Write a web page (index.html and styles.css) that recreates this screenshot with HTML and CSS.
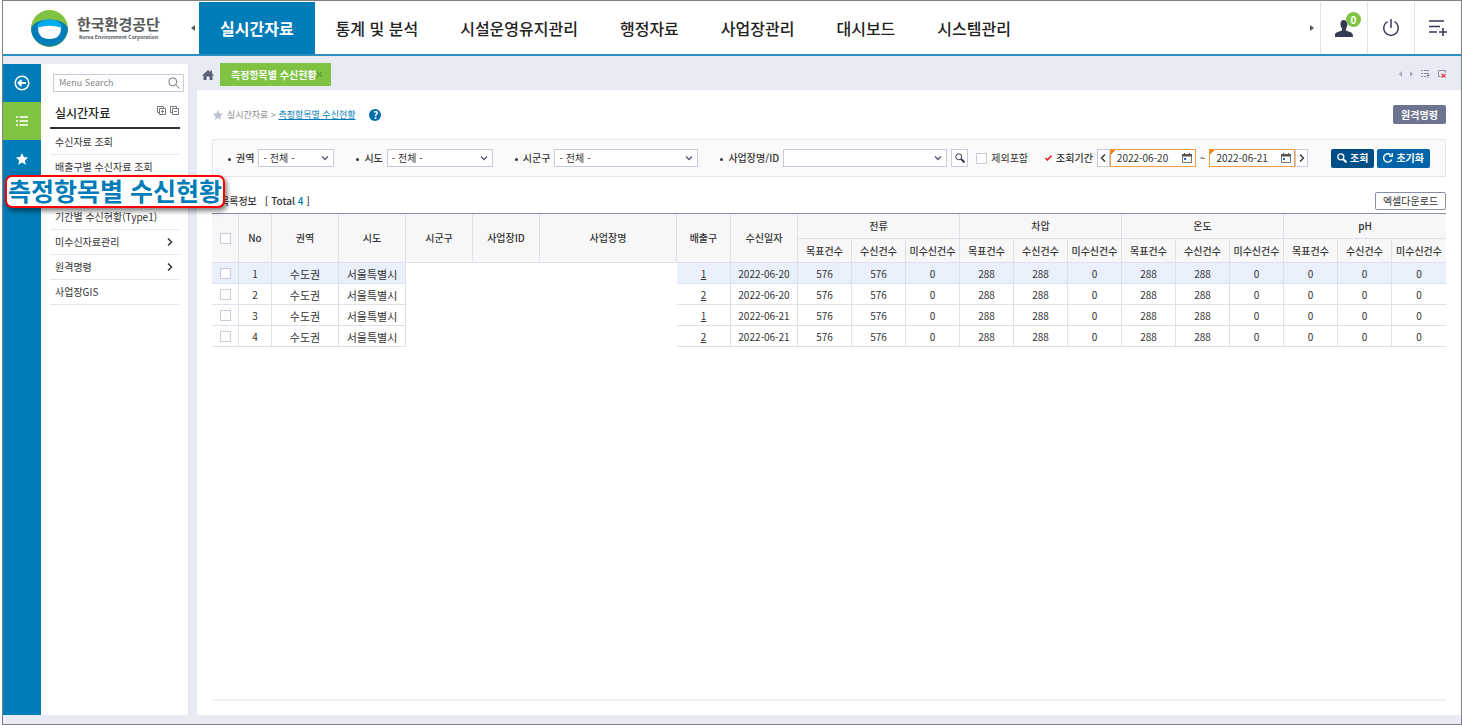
FILE: index.html
```
<!DOCTYPE html>
<html lang="ko">
<head>
<meta charset="utf-8">
<title>측정항목별 수신현황</title>
<link rel="stylesheet" href="styles.css">
</head>
<body>
<div class="app">
  <header class="header">
    <a class="logo" href="#">
      <svg class="logo-mark" viewBox="0 0 37 37" aria-hidden="true">
        <circle cx="18.500" cy="18.500" r="18.500" fill="#80c342"/>
        <path d="M0 18Q4 9.500 18.500 9.500T37 18A18.500 18.500 0 0 1 0 18z" fill="#007cb8"/>
        <path d="M6 17Q8 9.500 18.500 9.500T31 17L18.500 20z" fill="#00aeef"/>
        <path d="M7 17.500Q18.500 14 30 17.500Q30 29 18.500 29T7 17.500z" fill="#fff"/>
      </svg>
      <span class="logo-text"><strong>한국환경공단</strong><small>Korea Environment Corporation</small></span>
    </a>
    <button class="scroll-btn" aria-label="이전 메뉴"><svg width="4" height="6" viewBox="0 0 4 6"><path d="M4 0v6L0 3z" fill="#555"/></svg></button>
    <nav class="main-nav">
      <a class="active" href="#">실시간자료</a>
      <a href="#">통계 및 분석</a>
      <a href="#">시설운영유지관리</a>
      <a href="#">행정자료</a>
      <a href="#">사업장관리</a>
      <a href="#">대시보드</a>
      <a href="#">시스템관리</a>
    </nav>
    <button class="scroll-btn next" aria-label="다음 메뉴"><svg width="4" height="6" viewBox="0 0 4 6"><path d="M0 0v6l4-3z" fill="#555"/></svg></button>
    <div class="tools">
      <button aria-label="사용자">
        <svg width="18" height="18" viewBox="0 0 18 18"><path d="M8.500 1C6.500 1 5.300 3 5.500 5.500c.1 2 .8 3 1.500 4v1.800c-1 1.200-6.500 1.700-7 4L0 18h18l-.3-2.700c-.5-2.300-5.700-2.800-6.700-4V9.500c.7-1 1.300-2 1.400-4C12.500 3 11 1 8.500 1z" fill="#363a54"/></svg>
        <span class="badge">0</span>
      </button>
      <button aria-label="로그아웃"><svg width="18" height="18" viewBox="0 0 18 18" fill="none" stroke="#363a54" stroke-width="1.500"><path d="M5.500 2.700a7.300 7.300 0 1 0 7 0M9 0v9"/></svg></button>
      <button aria-label="메뉴 추가"><svg width="18" height="16" viewBox="0 0 18 16" fill="none" stroke="#363a54" stroke-width="1.600"><path d="M0 1h15M0 6.500h11M0 12h8M10 12h8M14 8v8"/></svg></button>
    </div>
  </header>

  <div class="body">
    <div class="rail">
      <button aria-label="메뉴 닫기"><svg width="16" height="16" viewBox="0 0 16 16" fill="none" stroke="#fff" stroke-width="1.500"><circle cx="8" cy="8" r="6.800"/><path d="M12 8H5M7.500 5L4.500 8l3 3" stroke-width="2"/></svg></button>
      <button class="on" aria-label="메뉴 목록"><svg width="12" height="10" viewBox="0 0 12 10" stroke="#fff" stroke-width="1.500"><path d="M0 1h2M3.500 1H12M0 5h2M3.500 5H12M0 9h2M3.500 9H12"/></svg></button>
      <button aria-label="즐겨찾기"><svg width="12" height="12" viewBox="0 0 12 12"><path d="M6 0l1.800 4 4.200.5-3.100 2.900.8 4.300L6 9.600l-3.700 2.100.8-4.300L0 4.500 4.200 4z" fill="#fff"/></svg></button>
    </div>
    <aside class="side">
      <div class="menu-search">
        <input type="text" placeholder="Menu Search" aria-label="Menu Search">
        <button aria-label="검색"><svg width="12" height="12" viewBox="0 0 12 12" fill="none" stroke="#777"><circle cx="4.800" cy="4.800" r="4"/><path d="M7.800 7.800L11.500 11.500"/></svg></button>
      </div>
      <div class="side-head">
        <h2>실시간자료</h2>
        <button aria-label="모두 펼치기"><svg width="9" height="9" viewBox="0 0 9 9" fill="none" stroke="#777"><path d="M2 6.500H.5v-6h6V2M2.500 2.500h6v6h-6zM4 5.500h3M5.500 4v3"/></svg></button>
        <button aria-label="모두 접기"><svg width="9" height="9" viewBox="0 0 9 9" fill="none" stroke="#777"><path d="M2 6.500H.5v-6h6V2M2.500 2.500h6v6h-6zM4 5.500h3"/></svg></button>
      </div>
      <ul class="side-menu">
        <li><a href="#">수신자료 조회</a></li>
        <li><a href="#">배출구별 수신자료 조회</a></li>
        <li class="current"><a class="callout" href="#">측정항목별 수신현황</a></li>
        <li><a href="#">기간별 수신현황(Type1)</a></li>
        <li><a href="#">미수신자료관리<svg width="6" height="8" viewBox="0 0 6 8" fill="none" stroke="#333" stroke-width="1.500"><path d="M1 .5L4.500 4 1 7.500"/></svg></a></li>
        <li><a href="#">원격명령<svg width="6" height="8" viewBox="0 0 6 8" fill="none" stroke="#333" stroke-width="1.500"><path d="M1 .5L4.500 4 1 7.500"/></svg></a></li>
        <li><a href="#">사업장GIS</a></li>
      </ul>
    </aside>

    <div class="work">
      <div class="tabs">
        <a class="home" href="#" aria-label="홈"><svg width="12" height="10" viewBox="0 0 12 10"><path d="M6 0l2.500 2V.5H10v2.800L12 5.500h-1.500V10h-3V6.500h-3V10h-3V5.500H0z" fill="#5b617b"/></svg></a>
        <div class="tab"><span>측정항목별 수신현황</span><button aria-label="탭 닫기"><svg width="5" height="5" viewBox="0 0 5 5" stroke="#4e7a2a"><path d="M0 0l5 5M5 0L0 5"/></svg></button></div>
        <div class="tab-tools">
          <button aria-label="이전 탭"><svg width="3" height="6" viewBox="0 0 3 6"><path d="M3 0v6L0 3z" fill="#a3a6b5"/></svg></button>
          <button aria-label="다음 탭"><svg width="3" height="6" viewBox="0 0 3 6"><path d="M0 0v6l3-3z" fill="#a3a6b5"/></svg></button>
          <button aria-label="탭 목록"><svg width="9" height="8" viewBox="0 0 9 8" stroke="#8b8fa3"><path d="M0 .5h2M3 .5h5M0 3.500h2M3 3.500h5M0 6.500h2M3 6.500h2M5.500 5.500h3M7 4v4"/></svg></button>
          <button aria-label="모두 닫기"><svg width="8" height="8" viewBox="0 0 8 8" fill="none" stroke="#8b8fa3"><path d="M2.500 6.500h-2v-6h7v2"/><path d="M3.500 4l4 3.500M7.500 4l-4 3.500" stroke="#e5353f" stroke-width="1.300"/></svg></button>
        </div>
      </div>

      <main class="page">
        <div class="crumbs">
          <svg width="10" height="10" viewBox="0 0 12 12"><path d="M6 0l1.800 4 4.200.5-3.100 2.900.8 4.300L6 9.600l-3.700 2.100.8-4.300L0 4.500 4.200 4z" fill="#b9c3d4"/></svg>
          <span>실시간자료 &gt; <a href="#">측정항목별 수신현황</a></span>
          <button class="help" aria-label="도움말">?</button>
          <button class="remote">원격명령</button>
        </div>

        <form class="filter">
          <div class="field area">
            <label for="area">권역</label>
            <span class="pick"><select id="area"><option>- 전체 -</option></select><svg viewBox="0 0 8 5"><path d="M1 .5l3 3 3-3"/></svg></span>
          </div>
          <div class="field sido">
            <label for="sido">시도</label>
            <span class="pick"><select id="sido"><option>- 전체 -</option></select><svg viewBox="0 0 8 5"><path d="M1 .5l3 3 3-3"/></svg></span>
          </div>
          <div class="field sigungu">
            <label for="sigungu">시군구</label>
            <span class="pick"><select id="sigungu"><option>- 전체 -</option></select><svg viewBox="0 0 8 5"><path d="M1 .5l3 3 3-3"/></svg></span>
          </div>
          <div class="field site">
            <label for="site">사업장명/ID</label>
            <span class="pick"><select id="site"><option></option></select><svg viewBox="0 0 8 5"><path d="M1 .5l3 3 3-3"/></svg></span>
            <button class="find" type="button" aria-label="사업장 검색"><svg width="10" height="10" viewBox="0 0 10 10" fill="none" stroke="#363a54"><circle cx="3.800" cy="3.800" r="3"/><path d="M6 6l3.500 3.500" stroke-width="2"/></svg></button>
          </div>
          <div class="exclude"><input type="checkbox" id="exclude"><label for="exclude">제외포함</label></div>
          <div class="period">
            <svg class="must" width="7" height="6" viewBox="0 0 7 6" fill="none" stroke="#e8202a" stroke-width="1.600"><path d="M.5 3l2 2L6.500.5"/></svg>
            <label for="from">조회기간</label>
            <div class="range">
              <button class="step" type="button" aria-label="이전 날짜"><svg width="6" height="8" viewBox="0 0 6 8"><path d="M5 .5L1.500 4 5 7.500"/></svg></button>
              <span class="date"><input id="from" type="text" value="2022-06-20"><svg width="10" height="10" viewBox="0 0 10 10"><path d="M.5 1.500h9v8h-9z" fill="#fff" stroke="#777"/><path d="M0 1h10v2.500H0zM2 0h1v1H2zM7 0h1v1H7z" fill="#555"/><path d="M2 5h2v2H2z" fill="#2d5bd8"/></svg></span>
            </div>
            <span class="tilde">~</span>
            <div class="range">
              <span class="date"><input id="to" type="text" value="2022-06-21" aria-label="종료일"><svg width="10" height="10" viewBox="0 0 10 10"><path d="M.5 1.500h9v8h-9z" fill="#fff" stroke="#777"/><path d="M0 1h10v2.500H0zM2 0h1v1H2zM7 0h1v1H7z" fill="#555"/><path d="M2 5h2v2H2z" fill="#2d5bd8"/></svg></span>
              <button class="step" type="button" aria-label="다음 날짜"><svg width="6" height="8" viewBox="0 0 6 8"><path d="M1 .5L4.500 4 1 7.500"/></svg></button>
            </div>
          </div>
          <div class="actions">
            <button class="query" type="button"><svg width="10" height="10" viewBox="0 0 10 10" fill="none" stroke="#fff"><circle cx="3.800" cy="3.800" r="3" stroke-width="1.300"/><path d="M6 6l3.500 3.500" stroke-width="2"/></svg>조회</button>
            <button type="reset"><svg width="10" height="10" viewBox="0 0 10 10" fill="none" stroke="#fff" stroke-width="1.400"><path d="M8.700 6.500A4.200 4.200 0 1 1 7.500 1.700M9.300 0v3.300H6"/></svg>초기화</button>
          </div>
        </form>

        <div class="list-head">
          <h3>목록정보</h3><span>[ Total <b>4</b> ]</span>
          <button>엑셀다운로드</button>
        </div>

        <div class="grid">
          <table>
            <colgroup>
              <col class="c-check"><col class="c-no"><col class="c-mid"><col class="c-mid"><col class="c-mid"><col class="c-mid"><col class="c-name"><col class="c-num"><col class="c-mid">
              <col span="12" class="c-num">
            </colgroup>
            <thead>
              <tr>
                <th rowspan="2"><input type="checkbox" aria-label="전체 선택"></th>
                <th rowspan="2">No</th><th rowspan="2">권역</th><th rowspan="2">시도</th><th rowspan="2">시군구</th><th rowspan="2">사업장ID</th><th rowspan="2">사업장명</th><th rowspan="2">배출구</th><th rowspan="2">수신일자</th>
                <th class="group" colspan="3">전류</th><th class="group" colspan="3">차압</th><th class="group" colspan="3">온도</th><th class="group" colspan="3">pH</th>
              </tr>
              <tr>
                <th>목표건수</th><th>수신건수</th><th>미수신건수</th>
                <th>목표건수</th><th>수신건수</th><th>미수신건수</th>
                <th>목표건수</th><th>수신건수</th><th>미수신건수</th>
                <th>목표건수</th><th>수신건수</th><th>미수신건수</th>
              </tr>
            </thead>
            <tbody>
              <tr class="selected">
                <td><input type="checkbox" aria-label="1행 선택"></td><td>1</td><td class="place">수도권</td><td class="place">서울특별시</td><td class="blank" colspan="3" rowspan="4"></td><td><a href="#">1</a></td><td>2022-06-20</td>
                <td>576</td><td>576</td><td>0</td><td>288</td><td>288</td><td>0</td><td>288</td><td>288</td><td>0</td><td>0</td><td>0</td><td>0</td>
              </tr>
              <tr>
                <td><input type="checkbox" aria-label="2행 선택"></td><td>2</td><td class="place">수도권</td><td class="place">서울특별시</td><td><a href="#">2</a></td><td>2022-06-20</td>
                <td>576</td><td>576</td><td>0</td><td>288</td><td>288</td><td>0</td><td>288</td><td>288</td><td>0</td><td>0</td><td>0</td><td>0</td>
              </tr>
              <tr>
                <td><input type="checkbox" aria-label="3행 선택"></td><td>3</td><td class="place">수도권</td><td class="place">서울특별시</td><td><a href="#">1</a></td><td>2022-06-21</td>
                <td>576</td><td>576</td><td>0</td><td>288</td><td>288</td><td>0</td><td>288</td><td>288</td><td>0</td><td>0</td><td>0</td><td>0</td>
              </tr>
              <tr>
                <td><input type="checkbox" aria-label="4행 선택"></td><td>4</td><td class="place">수도권</td><td class="place">서울특별시</td><td><a href="#">2</a></td><td>2022-06-21</td>
                <td>576</td><td>576</td><td>0</td><td>288</td><td>288</td><td>0</td><td>288</td><td>288</td><td>0</td><td>0</td><td>0</td><td>0</td>
              </tr>
            </tbody>
          </table>
        </div>
      </main>
    </div>
  </div>
</div>
</body>
</html>
```
FILE: styles.css
```
* { box-sizing: border-box; }
body {
  margin: 0;
  background: #fff;
  color: #333;
  font: 10px/14px "Noto Sans CJK KR", "Noto Sans", sans-serif;
}
button, input, select { font: inherit; color: inherit; }
button { margin: 0; padding: 0; border: 0; background: none; display: inline-flex; align-items: center; justify-content: center; }
a { color: inherit; text-decoration: none; }
svg { display: block; flex: none; }
h2, h3, ul { margin: 0; padding: 0; list-style: none; }
input[type="checkbox"] { appearance: none; width: 11px; height: 11px; margin: 0; border: 1px solid #c9cbdc; background: #fff; display: block; }

.app { display: flex; flex-direction: column; min-height: 100vh; margin-left: 2px; border: 1px solid #808080; background: #e8ebf4; }

/* top bar */
.header { display: flex; align-items: stretch; height: 55px; padding-top: 1px; background: #fff; border-bottom: 2px solid #2a90c4; }
.logo { display: flex; align-items: center; gap: 9px; width: 183px; padding-left: 28px; }
.logo-mark { width: 37px; height: 37px; }
.logo-text { display: flex; flex-direction: column; color: #58595b; }
.logo-text strong { font-size: 15px; line-height: 18px; font-weight: 700; }
.logo-text small { padding-left: 2px; font-size: 5px; line-height: 8px; font-weight: 700; white-space: nowrap; }
.scroll-btn { width: 13px; }
.scroll-btn.next { width: 16px; margin-left: auto; }
.main-nav { display: flex; }
.main-nav a { display: flex; align-items: center; padding: 0 21px; font-size: 16px; font-weight: 500; color: #222; white-space: nowrap; }
.main-nav .active { background: #007cb8; color: #fff; font-weight: 700; }
.tools { display: flex; }
.tools button { position: relative; width: 47px; border-left: 1px solid #e4e4e8; }
.badge { position: absolute; left: 25px; top: 10px; width: 15px; height: 15px; border-radius: 50%; background: #80c342; color: #fff; font-weight: 700; line-height: 15px; text-align: center; }

.body { display: flex; flex: 1; }
.rail { display: flex; flex-direction: column; width: 38px; margin: 8px 0 9px; background: #007cb8; }
.rail button { height: 38px; }
.rail .on { background: #80c342; }

/* side menu */
.side { width: 148px; margin: 8px 0 9px; padding: 10px 8px 0 9px; background: #fff; border-right: 1px solid #dfe2ec; }
.menu-search { display: flex; height: 18px; margin: 0 -4px 0 3px; padding-right: 3px; border: 1px solid #c9cbdc; }
.menu-search input { flex: 1; min-width: 0; padding: 0 5px; border: 0; font-size: 9px; }
.menu-search input::placeholder { color: #888; opacity: 1; }
.side-head { display: flex; align-items: center; gap: 4px; height: 37px; padding: 6px 1px 0 5px; border-bottom: 2px solid #332f30; }
.side-head h2 { flex: 1; font-size: 12px; line-height: 18px; font-weight: 500; color: #222; }
.side-head button { align-self: flex-start; padding-top: 8px; }
.side-menu { padding-top: 1px; }
.side-menu li { position: relative; height: 25px; border-bottom: 1px solid #e6e6ec; }
.side-menu a { display: flex; align-items: center; justify-content: space-between; height: 24px; padding: 0 7px 0 5px; white-space: nowrap; }
.side-menu .current { z-index: 2; }
.side-menu .callout { position: absolute; left: -45px; top: -5px; height: 33px; padding: 0 1px 3px; border: 2px solid #f00; border-radius: 7px; background: #fff; box-shadow: 2px 3px 5px rgba(0, 0, 0, .5); color: #007cb8; font-size: 25px; line-height: 26px; font-weight: 700; }

/* work area */
.work { display: flex; flex-direction: column; flex: 1; min-width: 0; margin: 0 0 9px 8px; }
.tabs { display: flex; align-items: center; height: 34px; padding: 3px 15px 0 5px; }
.tab { display: flex; align-items: center; height: 23px; margin: 0 0 0 6px; padding: 0 9px 0 11px; background: #80c342; color: #fff; font-weight: 700; }
.tab-tools { display: flex; align-items: center; gap: 8px; margin-left: auto; padding-bottom: 2px; }
.page { display: flex; flex-direction: column; flex: 1; padding: 15px 15px 14px; background: #fff; }
.crumbs { display: flex; align-items: center; height: 20px; gap: 4px; padding: 0 0 1px 1px; color: #888; font-size: 9px; }
.crumbs a { color: #007cb8; text-decoration: underline; }
.help { width: 12px; height: 12px; margin-left: 10px; border-radius: 50%; background: #006eab; color: #fff; font-size: 10px; font-weight: 700; line-height: 12px; }
.remote { width: 53px; height: 19px; margin-left: auto; border-radius: 2px; background: #6c748f; color: #fff; font-size: 10px; font-weight: 700; }

.filter { display: flex; align-items: center; height: 38px; margin-top: 14px; padding: 0 15px; border: 1px solid #e4e6ee; background: #fafafa; white-space: nowrap; }
.field { display: flex; align-items: center; gap: 4px; margin-right: 22px; }
.field label { font-weight: 500; }
.field label::before { content: ""; display: inline-block; width: 3px; height: 3px; margin-right: 5px; border-radius: 50%; background: #333; vertical-align: middle; }
.pick { position: relative; display: flex; }
.pick select { appearance: none; width: 100%; height: 18px; padding: 0 4px; border: 1px solid #c9cbdc; border-radius: 0; background: #fff; line-height: 14px; }
.pick svg { position: absolute; right: 5px; top: 7px; width: 8px; height: 5px; fill: none; stroke: #555b70; stroke-width: 1.400; pointer-events: none; }
.area .pick { width: 76px; }
.sido .pick { width: 106px; }
.sigungu .pick { width: 144px; }
.site .pick { width: 164px; }
.field.site { margin-right: 8px; }
.find { width: 17px; height: 18px; border: 1px solid #c9cbdc; background: #fff; }
.exclude { display: flex; align-items: center; gap: 4px; }
.period { display: flex; align-items: center; gap: 4px; margin-left: 17px; }
.period label { font-weight: 500; }
.range { display: flex; }
.step { width: 13px; height: 18px; border: 1px solid #c9cbdc; background: #fff; }
.step svg { fill: none; stroke: #333; stroke-width: 1.400; }
.date { position: relative; display: flex; align-items: center; width: 86px; height: 18px; padding: 0 3px 0 6px; border: 1px solid #f79b45; background: linear-gradient(135deg, #f47a10 3px, #fff 3px); }
.date input { flex: 1; min-width: 0; padding: 0; border: 0; background: none; }
.actions { display: flex; gap: 3px; margin-left: auto; }
.actions button { height: 19px; padding: 0 6px; gap: 3px; border-radius: 2px; background: #0064aa; color: #fff; font-weight: 700; }
.actions .query { background: #004e86; }

.list-head { display: flex; align-items: center; height: 18px; margin-top: 15px; padding-left: 8px; }
.list-head h3 { margin-right: 8px; font-size: 10px; font-weight: 500; }
.list-head span { font-weight: 500; }
.list-head b { color: #007cb8; font-weight: 500; }
.list-head button { width: 71px; height: 18px; margin-left: auto; border: 1px solid #8a8fa8; border-radius: 2px; background: #fff; }

.grid { flex: 1; margin-top: 3px; border-top: 1px solid #8a8fa8; border-bottom: 2px solid #efeff7; }
table { width: 100%; table-layout: fixed; border-spacing: 0; text-align: center; }
.c-check { width: 27px; }
.c-no { width: 33px; }
.c-mid { width: 67px; }
.c-num { width: 54px; }
th, td { padding: 0; border-right: 1px solid #dfe1ea; border-bottom: 1px solid #dfe1ea; white-space: nowrap; }
th { height: 24px; background: #f7f7f7; font-weight: 500; }
.group { height: 25px; }
td { height: 21px; padding-top: 1px; }
th input[type="checkbox"], td input[type="checkbox"] { margin: 0 auto; }
td:last-child, .group:last-child, thead tr:last-child th:last-child { border-right: 0; }
td a { text-decoration: underline; }
.place { font-size: 11px; }
.selected td { background: #e9f0fc; }
.selected .blank { border: 0; background: #fff; }
```
